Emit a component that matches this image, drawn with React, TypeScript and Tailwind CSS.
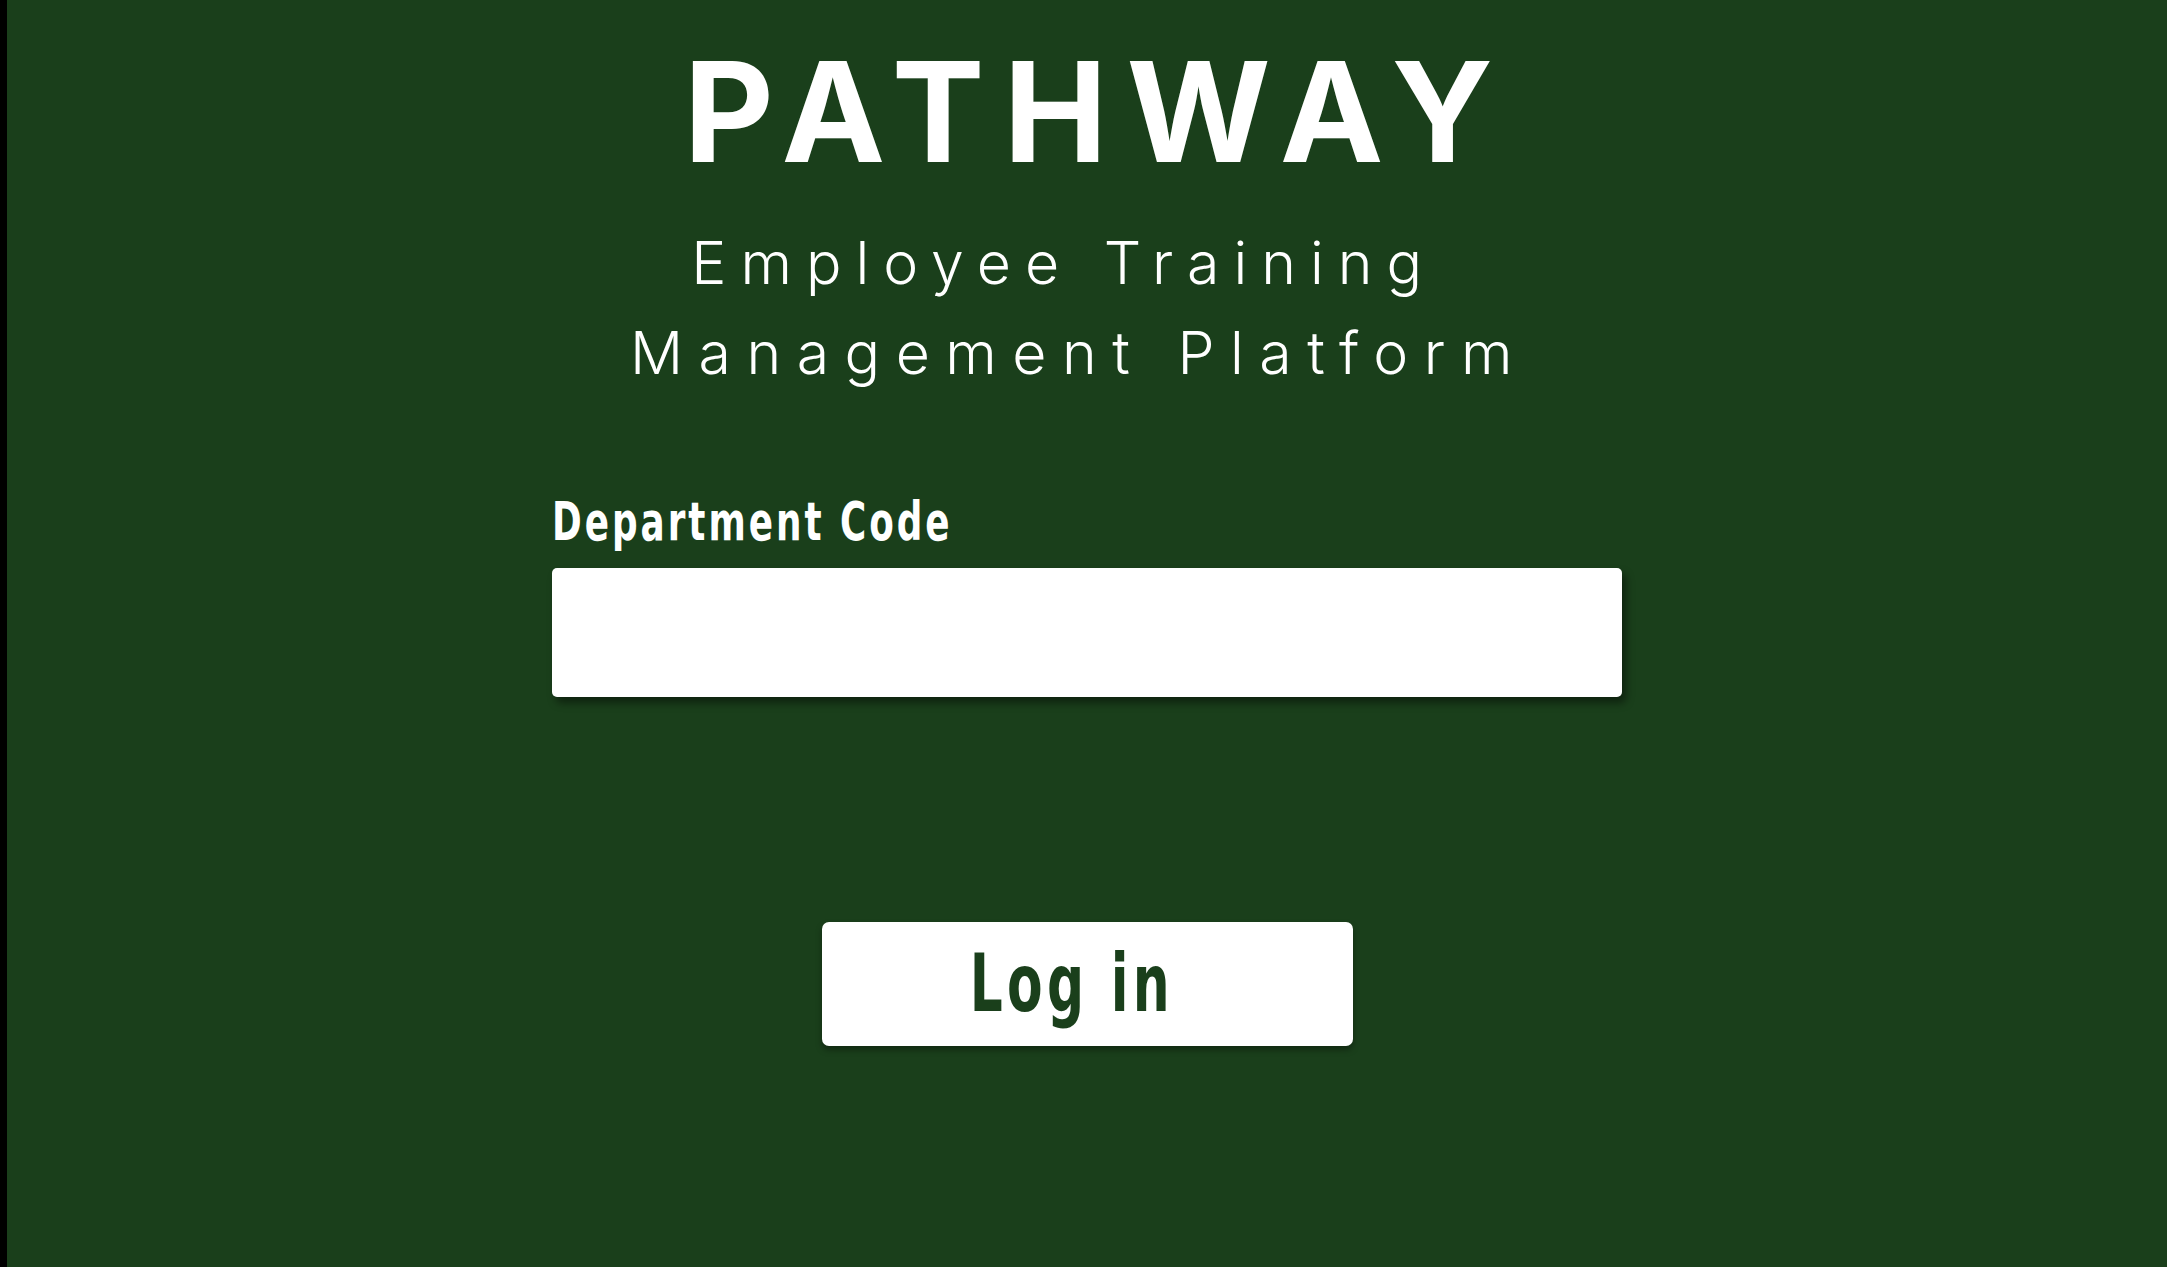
import React from "react";

export default function App() {
  return (
    <div className="flex w-full h-[1267px] overflow-hidden bg-[#1a3f1b]">
      <div className="w-[7px] shrink-0 bg-black" />
      <main className="flex-1 flex flex-col items-center">
        <h1
          className="mt-[42px] h-[139px] text-[139px] leading-none font-bold text-white tracking-[19px] pl-[22px]"
          style={{ fontFamily: "Inter, 'Liberation Sans', sans-serif" }}
        >
          PATHWAY
        </h1>
        <div
          className="mt-[37px] mr-[16px] flex flex-col items-center text-white text-[59px] leading-[90px] font-light"
          style={{ fontFamily: "Inter, 'Noto Sans', sans-serif" }}
        >
          <span className="whitespace-pre tracking-[14px]">{"Employee Training\u00A0"}</span>
          <span className="tracking-[15.5px]">Management Platform</span>
        </div>
        <div className="w-[1070px] flex flex-col mt-[97px]">
          <label
            className="h-[53px] text-[53px] leading-none font-bold text-white tracking-[4px] whitespace-nowrap origin-left scale-x-[0.75]"
            style={{ fontFamily: "'DejaVu Sans Condensed', 'DejaVu Sans', sans-serif" }}
          >
            Department Code
          </label>
          <input
            type="text"
            className="mt-[20px] w-[1070px] h-[129px] bg-white rounded-[5px] shadow-[4px_6px_8px_rgba(0,0,0,0.45)] outline-none px-4 text-[40px]"
          />
        </div>
        <button
          className="mt-[225px] w-[531px] h-[124px] bg-white rounded-[7px] shadow-[0_4px_6px_rgba(0,0,0,0.35)] flex items-center justify-center"
        >
          <span
            className="inline-block mr-[30px] text-[#1a3f1b] text-[80px] leading-none font-bold tracking-[6px] whitespace-nowrap scale-x-[0.72]"
            style={{ fontFamily: "'DejaVu Sans Condensed', 'DejaVu Sans', sans-serif" }}
          >
            Log in
          </span>
        </button>
      </main>
    </div>
  );
}
